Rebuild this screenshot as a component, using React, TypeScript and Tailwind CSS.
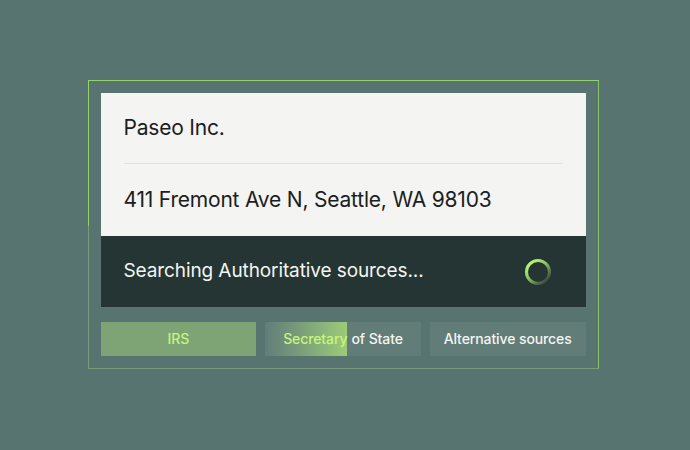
import React from 'react'

const font = { fontFamily: 'Inter, "Noto Sans", sans-serif' }

function Spinner() {
  return (
    <svg width="30" height="30" viewBox="0 0 30 30">
      <defs>
        <linearGradient id="spin" x1="0.1" y1="0.2" x2="0.8" y2="1">
          <stop offset="0%" stopColor="#b8f070" />
          <stop offset="40%" stopColor="#8cc266" />
          <stop offset="100%" stopColor="#35463f" />
        </linearGradient>
      </defs>
      <circle cx="15" cy="15" r="11.5" fill="none" stroke="url(#spin)" strokeWidth="3" />
    </svg>
  )
}

export default function App() {
  return (
    <div className="w-[690px] h-[450px] bg-[#587470] flex items-center justify-center" style={font}>
      <div className="relative w-[511px] border border-t-[#95d26a] border-r-[#8ac468] border-l-[#7a9c7a] border-b-[#7a9c7a] p-3 -translate-x-[2px] -translate-y-[1px]">
        <div className="absolute -left-px -top-px w-px h-[146px] bg-[#95d26a]" />
        <div className="flex flex-col">
          <div className="bg-[#f4f4f2] px-[23px]">
            <div className="h-[71px] flex items-center border-b border-[#e2e2df] text-[21px] text-[#1b201f] tracking-[-0.2px]">
              Paseo Inc.
            </div>
            <div className="h-[72px] flex items-center text-[21px] text-[#1b201f] tracking-[-0.2px]">
              411 Fremont Ave N, Seattle, WA 98103
            </div>
          </div>
          <div className="bg-[#253533] h-[71px] px-[23px] flex items-center justify-between">
            <span className="text-[19px] text-[#f3f5f2] tracking-[-0.1px]">Searching Authoritative sources...</span>
            <div className="mr-[10px] mt-[2px]">
              <Spinner />
            </div>
          </div>
          <div className="mt-[15px] grid grid-cols-3 gap-[9px] h-[34px] text-[14px] font-medium tracking-[-0.1px]">
            <div className="bg-[#7ea476] flex items-center justify-center text-[#c8f47c]">IRS</div>
            <div className="relative bg-[#627d78] flex items-center justify-center">
              <div className="absolute left-0 top-0 bottom-0 w-[82px] bg-gradient-to-r from-[#627d78] to-[#9ccb77]" />
              <span className="relative text-[#c8f47c]">Secretary</span>
              <span className="relative text-[#f3f5f2] ml-[4px]">of State</span>
            </div>
            <div className="bg-[#627d78] flex items-center justify-center text-[#f3f5f2]">Alternative sources</div>
          </div>
        </div>
      </div>
    </div>
  )
}
